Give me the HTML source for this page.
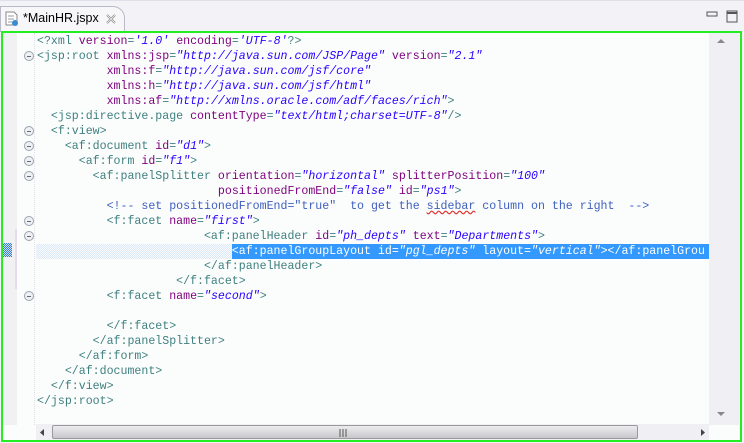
<!DOCTYPE html>
<html><head><meta charset="utf-8"><style>
*{margin:0;padding:0;box-sizing:border-box}
body{width:744px;height:443px;overflow:hidden;background:#f2f1f6;font-family:"Liberation Sans",sans-serif;position:relative}
.tabbar{position:absolute;left:0;top:0;width:744px;height:31px;background:#f3f2f7;border-top:1px solid #e0e0e8}
.tab{position:absolute;left:0;top:6px;width:125px;height:26px;background:#f7f7fa;border:1px solid #b9bcc8;border-bottom:none;border-radius:0 12px 0 0;}
.tab span{position:absolute;left:22px;top:4px;font-size:12.5px;color:#000}
.frame{position:absolute;left:1px;top:31px;width:741px;height:411px;border:2px solid #22ee22;background:#fbfdfd}
.gutter{position:absolute;left:3px;top:33px;width:14px;height:392px;background:#f1f1f4}
.ruler{position:absolute;left:17px;top:33px;width:18px;height:392px;background:#fbfdfd;border-right:1px dotted #e0e0e6}
.code{position:absolute;left:37px;top:34px;font-family:"Liberation Mono",monospace;font-size:11.6px;line-height:15px;white-space:pre;color:#3f7f7f}
.a{color:#7f007f}.s{color:#2a00ff;font-style:italic}.c{color:#3f5fbf}
.fold{position:absolute;left:24px;width:10px;height:10px;border:1px solid #9aa3b0;border-radius:50%;background:#eef0f4}
.fold:after{content:"";position:absolute;left:2px;top:4px;width:4px;height:1px;background:#667}
.vs{position:absolute;left:709px;top:33px;width:30px;height:392px;background:#f0f0f4}
.hs{position:absolute;left:36px;top:424px;width:673px;height:16px;background:#f0f0f4}
.thumb{position:absolute;left:16px;top:1px;width:586px;height:14px;border:1px solid #999;border-radius:2px;background:linear-gradient(#ececef,#c8c8cc)}
</style></head><body>
<div class="tabbar"></div>
<div class="tab">
<svg style="position:absolute;left:4px;top:4px" width="14" height="16"><path d="M1 1h8l3 3v10H1z" fill="#fff" stroke="#888"/><path d="M3 5h6M3 8h6M3 11h4" stroke="#99a"/><circle cx="10" cy="12" r="3" fill="#3a8ad0"/></svg>
<span>*MainHR.jspx</span>
<svg style="position:absolute;left:104px;top:6px" width="12" height="12"><path d="M2 2l8 8M10 2l-8 8" stroke="#888" stroke-width="2"/><path d="M2 2l8 8M10 2l-8 8" stroke="#fff" stroke-width="0.7"/></svg>
</div>
<svg style="position:absolute;left:706px;top:10px" width="36" height="14"><rect x="1" y="2" width="10" height="4" fill="none" stroke="#555"/><rect x="21" y="1" width="10" height="11" fill="none" stroke="#555"/><path d="M21 3h10" stroke="#555" stroke-width="2"/></svg>
<div class="frame"></div>
<div class="gutter"></div>
<div style="position:absolute;left:3px;top:243px;width:9px;height:14px;background:repeating-conic-gradient(#3b7bd0 0 25%,#cfe0f5 0 50%) 0 0/2px 2px"></div>
<div style="position:absolute;left:15px;top:229px;width:4px;height:60px;background:#e4dcec"></div>
<div class="ruler"></div>
<div style="position:absolute;left:36px;top:244px;width:673px;height:15px;background:repeating-conic-gradient(#dfeaf7 0 25%,#f6f9fd 0 50%) 0 0/2px 2px"></div>
<div style="position:absolute;left:232px;top:244px;width:477px;height:15px;background:#3399ff"></div>
<div class="fold" style="top:51px"></div><div class="fold" style="top:126px"></div><div class="fold" style="top:141px"></div><div class="fold" style="top:156px"></div><div class="fold" style="top:171px"></div><div class="fold" style="top:216px"></div><div class="fold" style="top:231px"></div><div class="fold" style="top:291px"></div>
<div class="code">&lt;?xml <span class="a">version</span>=<span class="s">'1.0'</span> <span class="a">encoding</span>=<span class="s">'UTF-8'</span>?&gt;
&lt;jsp:root <span class="a">xmlns:jsp</span>=<span class="s">"http://java.sun.com/JSP/Page"</span> <span class="a">version</span>=<span class="s">"2.1"</span>
          <span class="a">xmlns:f</span>=<span class="s">"http://java.sun.com/jsf/core"</span>
          <span class="a">xmlns:h</span>=<span class="s">"http://java.sun.com/jsf/html"</span>
          <span class="a">xmlns:af</span>=<span class="s">"http://xmlns.oracle.com/adf/faces/rich"</span>&gt;
  &lt;jsp:directive.page <span class="a">contentType</span>=<span class="s">"text/html;charset=UTF-8"</span>/&gt;
  &lt;f:view&gt;
    &lt;af:document <span class="a">id</span>=<span class="s">"d1"</span>&gt;
      &lt;af:form <span class="a">id</span>=<span class="s">"f1"</span>&gt;
        &lt;af:panelSplitter <span class="a">orientation</span>=<span class="s">"horizontal"</span> <span class="a">splitterPosition</span>=<span class="s">"100"</span>
                          <span class="a">positionedFromEnd</span>=<span class="s">"false"</span> <span class="a">id</span>=<span class="s">"ps1"</span>&gt;
          <span class="c">&lt;!-- set positionedFromEnd="true"  to get the <span style="text-decoration:underline wavy #e03030">sidebar</span> column on the right  --&gt;</span>
          &lt;f:facet <span class="a">name</span>=<span class="s">"first"</span>&gt;
                        &lt;af:panelHeader <span class="a">id</span>=<span class="s">"ph_depts"</span> <span class="a">text</span>=<span class="s">"Departments"</span>&gt;
<span style="color:#fff">                            &lt;af:panelGroupLayout id=<i>"pgl_depts"</i> layout=<i>"vertical"</i>&gt;&lt;/af:panelGrou</span>
                        &lt;/af:panelHeader&gt;
                    &lt;/f:facet&gt;
          &lt;f:facet <span class="a">name</span>=<span class="s">"second"</span>&gt;

          &lt;/f:facet&gt;
        &lt;/af:panelSplitter&gt;
      &lt;/af:form&gt;
    &lt;/af:document&gt;
  &lt;/f:view&gt;
&lt;/jsp:root&gt;</div>
<div class="vs"><svg style="position:absolute;left:7px;top:5px" width="10" height="6"><path d="M1 5h8L5 1z" fill="#888"/></svg><svg style="position:absolute;left:7px;top:378px" width="10" height="6"><path d="M1 1h8L5 5z" fill="#888"/></svg></div>
<div class="hs"><svg style="position:absolute;left:3px;top:4px" width="6" height="9"><path d="M5 1v7L1 4.5z" fill="#444"/></svg><div class="thumb"><svg style="position:absolute;left:286px;top:3px" width="8" height="8"><path d="M1 0v8M4 0v8M7 0v8" stroke="#555"/></svg></div><svg style="position:absolute;left:664px;top:4px" width="6" height="9"><path d="M1 1v7L5 4.5z" fill="#444"/></svg></div>
</body></html>
